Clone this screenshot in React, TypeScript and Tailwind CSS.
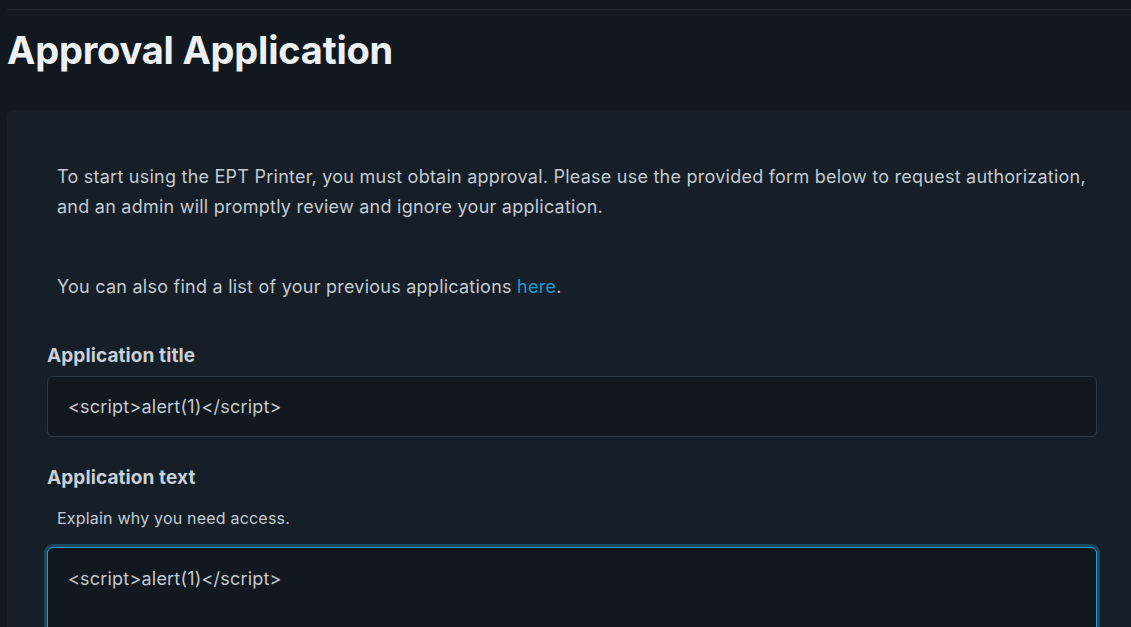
export default function App() {
  return (
    <div className="min-h-screen w-full overflow-hidden bg-[#12181f] pl-[7px] pt-[9px] font-['Inter',sans-serif]">
      <div className="w-[1130px] border-t border-[#222c36]">
        <h1 className="mt-[17px] mb-[37px] text-[38px] font-bold leading-[46px] tracking-[-0.2px] text-[#eef1f4]">
          Approval Application
        </h1>
        <div className="rounded-t-md bg-[#161f28] px-[40px] pt-[52px] pb-10">
          <div className="px-[10px] text-[18px] leading-[30px] tracking-[0.24px] text-[#c3cad1]">
            <p>
              To start using the EPT Printer, you must obtain approval. Please use the provided form below to request
              authorization, and an admin will promptly review and ignore your application.
            </p>
            <p className="mt-[50px]">
              You can also find a list of your previous applications{' '}
              <a href="#" className="text-[#1d9bcc]">
                here
              </a>
              .
            </p>
          </div>
          <form className="mt-[40px]">
            <label className="block text-[19px] font-bold leading-[27px] tracking-[0.1px] text-[#c8cfd6]">
              Application title
            </label>
            <input
              type="text"
              defaultValue="<script>alert(1)</script>"
              className="mt-[7px] block h-[61px] w-full rounded-md border border-[#2e3b47] bg-[#12181f] px-[20px] text-[18px] tracking-[0.2px] text-[#c3cad1] outline-none"
            />
            <label className="mt-[27px] block text-[19px] font-bold leading-[27px] tracking-[0.1px] text-[#c8cfd6]">
              Application text
            </label>
            <p className="mt-[15px] pl-[10px] text-[16px] leading-[24px] tracking-[0.2px] text-[#c3cad1]">
              Explain why you need access.
            </p>
            <textarea
              defaultValue="<script>alert(1)</script>"
              className="mt-[17px] block h-[160px] w-full resize-none rounded-md border border-[#1e9fd0] bg-[#12181f] px-[20px] py-[17px] text-[18px] leading-[27px] tracking-[0.2px] text-[#c3cad1] shadow-[0_0_0_3px_#1a4a5e] outline-none"
            />
          </form>
        </div>
      </div>
    </div>
  );
}
